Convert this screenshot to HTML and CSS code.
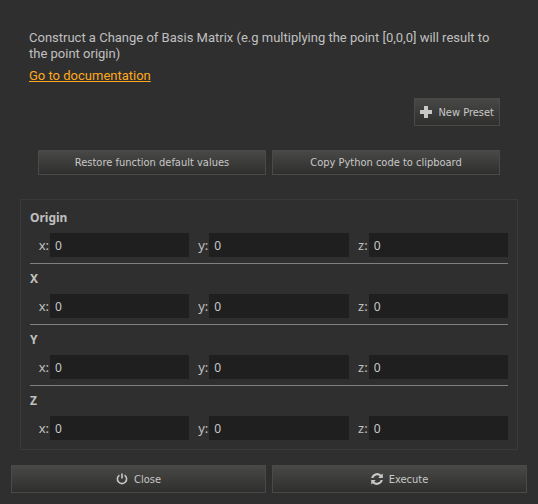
FILE: index.html
```
<!doctype html>
<html lang="en">
  <head>
    <meta charset="UTF-8" />
    <meta name="viewport" content="width=device-width, initial-scale=1.0" />
    <title>Change of Basis Matrix</title>
    <link rel="stylesheet" href="styles.css">
  </head>
  <body>
    <header class="intro">
      <p>Construct a Change of Basis Matrix (e.g multiplying the point [0,0,0] will result to the point origin)</p>
      <a href="#docs">Go to documentation</a>
    </header>

    <div class="presets">
      <button class="btn">
        <svg class="icon" viewBox="0 0 12 12"><path d="M4 0h4v4h4v4H8v4H4V8H0V4h4z" /></svg>
        New Preset
      </button>
    </div>

    <div class="tools">
      <button class="btn">Restore function default values</button>
      <button class="btn">Copy Python code to clipboard</button>
    </div>

    <form class="params" id="params">
      <section class="vector">
        <h2>Origin</h2>
        <div class="fields">
          <label for="origin-x">x:</label><input type="text" id="origin-x" value="0" />
          <label for="origin-y">y:</label><input type="text" id="origin-y" value="0" />
          <label for="origin-z">z:</label><input type="text" id="origin-z" value="0" />
        </div>
      </section>
      <section class="vector">
        <h2>X</h2>
        <div class="fields">
          <label for="x-x">x:</label><input type="text" id="x-x" value="0" />
          <label for="x-y">y:</label><input type="text" id="x-y" value="0" />
          <label for="x-z">z:</label><input type="text" id="x-z" value="0" />
        </div>
      </section>
      <section class="vector">
        <h2>Y</h2>
        <div class="fields">
          <label for="y-x">x:</label><input type="text" id="y-x" value="0" />
          <label for="y-y">y:</label><input type="text" id="y-y" value="0" />
          <label for="y-z">z:</label><input type="text" id="y-z" value="0" />
        </div>
      </section>
      <section class="vector">
        <h2>Z</h2>
        <div class="fields">
          <label for="z-x">x:</label><input type="text" id="z-x" value="0" />
          <label for="z-y">y:</label><input type="text" id="z-y" value="0" />
          <label for="z-z">z:</label><input type="text" id="z-z" value="0" />
        </div>
      </section>
    </form>

    <footer class="actions">
      <button class="btn">
        <svg class="icon line" viewBox="0 0 12 12">
          <path d="M3.4 2.2a4.6 4.6 0 1 0 5.2 0M6 0.6v5" />
        </svg>
        Close
      </button>
      <button class="btn" type="submit" form="params">
        <svg class="icon" viewBox="0 0 12 12">
          <path d="M0.2 5A6 6 0 0 1 10.2 1.8L11.8 0.4V5H7.2L8.8 3.3A4 4 0 0 0 2.3 5z" />
          <path d="M11.8 7A6 6 0 0 1 1.8 10.2L0.2 11.6V7H4.8L3.2 8.7A4 4 0 0 0 9.7 7z" />
        </svg>
        Execute
      </button>
    </footer>
  </body>
</html>
```
FILE: styles.css
```
* {
  box-sizing: border-box;
}
body {
  margin: 0;
  padding: 30px 11px 11px;
  background: #2f2f2f;
  color: #c0c0c0;
  font-family: Tahoma, Roboto, sans-serif;
  font-size: 13px;
  line-height: 16px;
}
.intro {
  padding: 0 27px 0 18px;
}
.intro p {
  margin: 0 0 6px;
}
.intro a {
  color: #ffaa1e;
}
.btn {
  display: flex;
  align-items: center;
  justify-content: center;
  gap: 6px;
  height: 28px;
  padding: 0 5px;
  border: 1px solid #4a4a4a;
  background: linear-gradient(#484846, #2f2f2d);
  color: #c8c8c8;
  font-family: "DejaVu Sans Condensed", "DejaVu Sans", sans-serif;
  font-size: 11px;
}
.btn:hover {
  border-color: #ffaa1e;
}
.icon {
  width: 12px;
  height: 12px;
  fill: #c8c8c8;
}
.icon.line {
  fill: none;
  stroke: #c8c8c8;
  stroke-width: 1.6;
}
.presets {
  display: flex;
  justify-content: flex-end;
  margin: 14px 27px 24px;
}
.tools {
  display: grid;
  grid-template-columns: 1fr 1fr;
  gap: 6px;
  margin: 0 27px 24px;
}
.tools .btn {
  height: 25px;
}
.params {
  margin: 0 9px 15px;
  padding: 9px 9px 3px;
  border: 1px solid #3a3a3a;
  font-family: "Noto Sans", sans-serif;
}
.vector {
  padding-bottom: 6px;
}
.vector + .vector {
  padding-top: 6px;
  border-top: 1px solid #808080;
}
.vector h2 {
  margin: 0 0 6px;
  font-size: 12px;
  line-height: 18px;
}
.fields {
  display: grid;
  grid-template-columns: 20px 1fr 20px 1fr 20px 1fr;
  align-items: center;
}
.fields label {
  padding-right: 1px;
  text-align: right;
}
.fields input {
  width: 100%;
  min-width: 0;
  height: 24px;
  padding: 0 5px;
  border: none;
  background: #1f1f1f;
  color: #c8c8c8;
  font-family: inherit;
  font-size: 12px;
}
.fields input:focus {
  outline: 1px solid #ffaa1e;
}
.actions {
  display: grid;
  grid-template-columns: 1fr 1fr;
  gap: 6px;
}
```
